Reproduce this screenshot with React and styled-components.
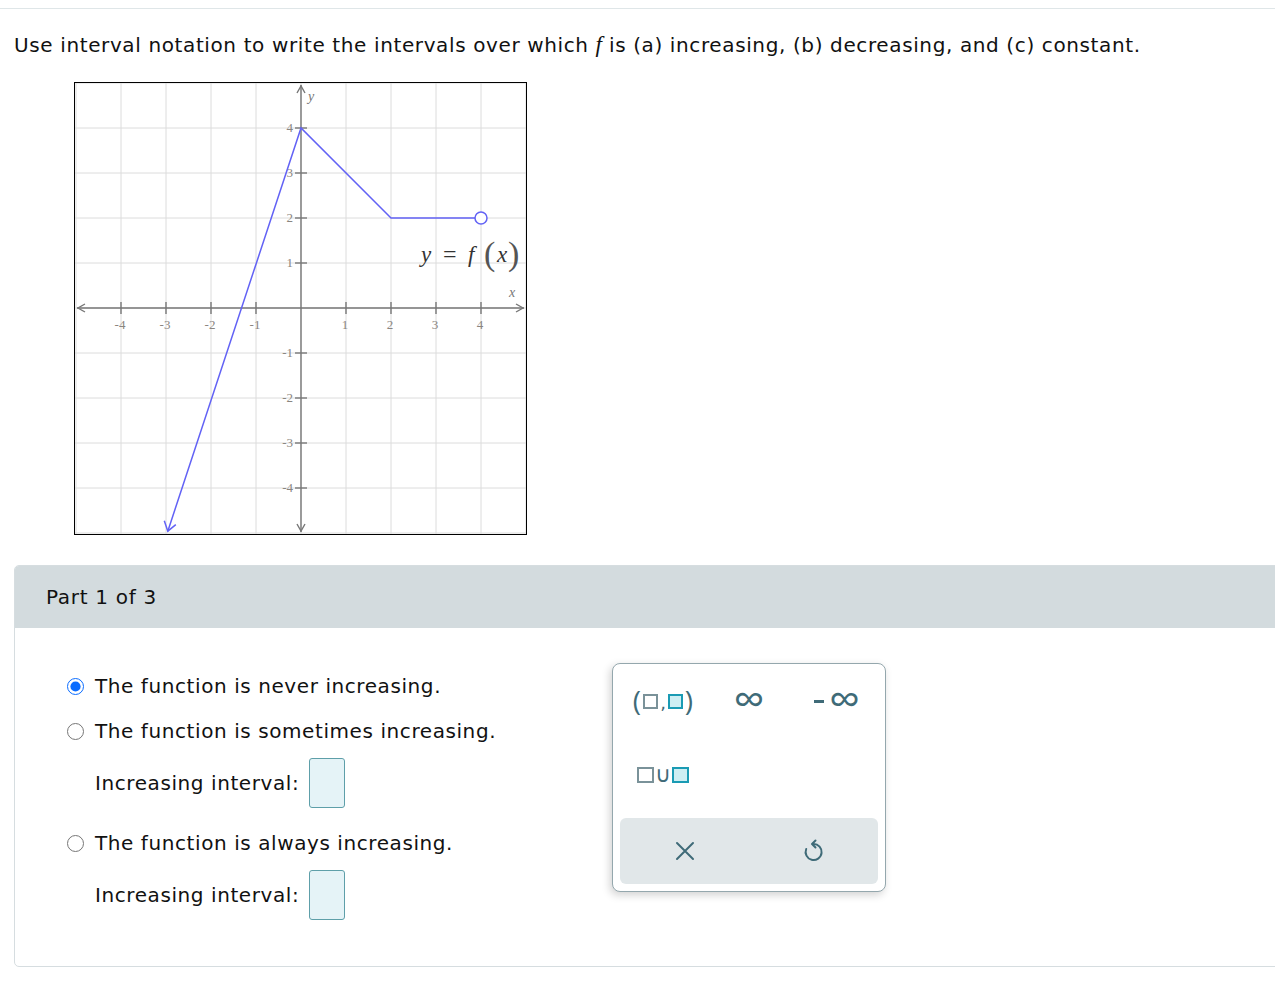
import React from 'react'
import styled, { createGlobalStyle } from 'styled-components'

const GlobalStyle = createGlobalStyle`
  html, body {
    margin: 0;
    padding: 0;
    background: #fff;
    overflow-x: hidden;
  }
  body {
    font-family: "DejaVu Sans", Verdana, sans-serif;
    color: #111;
  }
`

const UNIT = 45
const OX = 226
const OY = 225
const px = (x) => OX + x * UNIT
const py = (y) => OY - y * UNIT

const Graph = () => {
  const steps = [-5, -4, -3, -2, -1, 0, 1, 2, 3, 4, 5]
  const labels = [-4, -3, -2, -1, 1, 2, 3, 4]
  return (
    <svg width="451" height="451" viewBox="0 0 451 451">
      {steps.map((k) => (
        <line key={'v' + k} x1={px(k)} y1="0" x2={px(k)} y2="451" stroke="#dcdcdc" strokeWidth="1" />
      ))}
      {steps.map((k) => (
        <line key={'h' + k} x1="0" y1={py(k)} x2="451" y2={py(k)} stroke="#dcdcdc" strokeWidth="1" />
      ))}
      <g stroke="#777" strokeWidth="1.4" fill="none">
        <line x1="2" y1={OY} x2="449" y2={OY} />
        <line x1={OX} y1="2" x2={OX} y2="449" />
        <polyline points={`10,${OY - 4} 3,${OY} 10,${OY + 4}`} />
        <polyline points={`441,${OY - 4} 448,${OY} 441,${OY + 4}`} />
        <polyline points={`${OX - 4},10 ${OX},3 ${OX + 4},10`} />
        <polyline points={`${OX - 4},441 ${OX},448 ${OX + 4},441`} />
        {labels.map((k) => (
          <line key={'tx' + k} x1={px(k)} y1={OY - 6} x2={px(k)} y2={OY + 6} />
        ))}
        {labels.map((k) => (
          <line key={'ty' + k} x1={OX - 6} y1={py(k)} x2={OX + 6} y2={py(k)} />
        ))}
      </g>
      <g fill="#8a8580" fontFamily='"Liberation Serif", serif' fontSize="13">
        {labels.map((k) => (
          <text key={'lx' + k} x={px(k) - 1} y={OY + 21} textAnchor="middle">{k}</text>
        ))}
        {labels.map((k) => (
          <text key={'ly' + k} x={OX - 8} y={py(k) + 4} textAnchor="end">{k}</text>
        ))}
      </g>
      <g fill="#777" fontFamily='"Liberation Serif", serif' fontSize="14" fontStyle="italic">
        <text x="233" y="18">y</text>
        <text x="434" y="214">x</text>
      </g>
      <g stroke="#6262f5" strokeWidth="1.5" fill="none">
        <polyline points={`${px(-2.96)},${py(-4.96)} ${px(0)},${py(4)} ${px(2)},${py(2)} ${px(4) - 6},${py(2)}`} />
        <polyline points={`${px(-2.96) - 3.5},${py(-4.96) - 10.5} ${px(-2.96)},${py(-4.96)} ${px(-2.96) + 8},${py(-4.96) - 6.5}`} />
        <circle cx={px(4)} cy={py(2)} r="6" fill="#fff" />
      </g>
      <g fill="#333" fontFamily='"Liberation Serif", serif'>
        <text x="346" y="179" fontSize="23" fontStyle="italic">y</text>
        <text x="368" y="179" fontSize="24">=</text>
        <text x="393" y="179" fontSize="23" fontStyle="italic">f</text>
        <text x="409" y="182" fontSize="34" fill="#555">(</text>
        <text x="422" y="179" fontSize="23" fontStyle="italic">x</text>
        <text x="433" y="182" fontSize="34" fill="#555">)</text>
      </g>
    </svg>
  )
}

const BoxGlyph = ({ active, big }) => <Square $active={active} $big={big} />

export default function App() {
  return (
    <>
      <GlobalStyle />
      <Page>
        <Question>
          Use interval notation to write the intervals over which <MathF>f</MathF> is (a) increasing, (b)
          decreasing, and (c) constant.
        </Question>
        <GraphFrame>
          <Graph />
        </GraphFrame>
        <PartCard>
          <PartHeader>Part 1 of 3</PartHeader>
          <PartBody>
            <Options>
              <RadioRow>
                <Radio type="radio" name="inc" defaultChecked />
                <span>The function is never increasing.</span>
              </RadioRow>
              <RadioRow>
                <Radio type="radio" name="inc" />
                <span>The function is sometimes increasing.</span>
              </RadioRow>
              <IntervalRow>
                <span>Increasing interval:</span>
                <AnswerBox />
              </IntervalRow>
              <RadioRow $top={20}>
                <Radio type="radio" name="inc" />
                <span>The function is always increasing.</span>
              </RadioRow>
              <IntervalRow>
                <span>Increasing interval:</span>
                <AnswerBox />
              </IntervalRow>
            </Options>
            <Keypad>
              <KeyGrid>
                <Key>
                  <Paren>(</Paren>
                  <BoxGlyph />
                  <Comma>,</Comma>
                  <BoxGlyph active />
                  <Paren>)</Paren>
                </Key>
                <Key>
                  <Infinity>∞</Infinity>
                </Key>
                <Key $shift={4}>
                  <Minus />
                  <Infinity>∞</Infinity>
                </Key>
                <Key>
                  <BoxGlyph big />
                  <Union>∪</Union>
                  <BoxGlyph active big />
                </Key>
                <Key />
                <Key />
              </KeyGrid>
              <ActionBar>
                <ActionButton aria-label="clear">
                  <svg width="22" height="22" viewBox="0 0 22 22">
                    <path d="M3 3 L19 19 M19 3 L3 19" stroke="#3f6b78" strokeWidth="2" strokeLinecap="round" fill="none" />
                  </svg>
                </ActionButton>
                <ActionButton aria-label="undo">
                  <svg width="26" height="26" viewBox="0 0 26 26">
                    <path d="M12.5 6 A8 8 0 1 1 5.2 11" stroke="#3f6b78" strokeWidth="2" strokeLinecap="round" fill="none" />
                    <path d="M14.5 2.5 L11 6 L14.5 9.5" stroke="#3f6b78" strokeWidth="2" strokeLinecap="round" strokeLinejoin="round" fill="none" />
                  </svg>
                </ActionButton>
              </ActionBar>
            </Keypad>
          </PartBody>
        </PartCard>
      </Page>
    </>
  )
}

const Page = styled.div`
  margin-top: 8px;
  border-top: 1px solid #dfe6e8;
  padding: 24px 0 24px 14px;
`

const Question = styled.div`
  font-size: 20px;
  line-height: 23px;
  letter-spacing: 0.62px;
`

const MathF = styled.span`
  font-family: "Liberation Serif", serif;
  font-style: italic;
  font-size: 23px;
  letter-spacing: 0;
`

const GraphFrame = styled.div`
  margin: 25px 0 0 60px;
  width: 451px;
  height: 451px;
  border: 1px solid #000;
  svg {
    display: block;
  }
`

const PartCard = styled.div`
  margin-top: 30px;
  margin-right: -30px;
  border: 1px solid #d6dde0;
  border-radius: 5px;
  overflow: hidden;
`

const PartHeader = styled.div`
  height: 62px;
  background: #d3dbde;
  padding-left: 31px;
  display: flex;
  align-items: center;
  font-size: 20px;
  letter-spacing: 0.7px;
`

const PartBody = styled.div`
  display: flex;
  align-items: flex-start;
  padding: 43px 0 46px 52px;
`

const Options = styled.div`
  width: 545px;
  font-size: 20px;
  letter-spacing: 0.58px;
`

const RadioRow = styled.label`
  display: flex;
  align-items: center;
  height: 30px;
  margin-top: ${(p) => (p.$top !== undefined ? p.$top : 0)}px;
  margin-bottom: 15px;
  gap: 11px;
`

const Radio = styled.input`
  width: 17px;
  height: 17px;
  margin: 0;
  accent-color: #0a6cff;
`

const IntervalRow = styled.div`
  display: flex;
  align-items: center;
  gap: 10px;
  margin: -3px 0 0 28px;
`

const AnswerBox = styled.div`
  width: 34px;
  height: 48px;
  background: #e5f3f7;
  border: 1px solid #5e9fa9;
  border-radius: 3px;
`

const Keypad = styled.div`
  margin-top: -8px;
  width: 258px;
  padding: 0 7px 7px;
  border: 1px solid #94a7ad;
  border-radius: 8px;
  box-shadow: -2px 3px 8px rgba(0, 0, 0, 0.18);
  background: #fff;
`

const KeyGrid = styled.div`
  display: grid;
  grid-template-columns: repeat(3, 1fr);
  grid-auto-rows: 74px;
`

const Key = styled.div`
  display: flex;
  align-items: center;
  justify-content: center;
  padding-left: ${(p) => p.$shift || 0}px;
  color: #3f6b78;
  font-family: "DejaVu Sans", sans-serif;
`

const Paren = styled.span`
  font-family: "Open Sans", sans-serif;
  font-size: 28px;
  line-height: 1;
  margin: 0 2px;
  transform: translateY(-1px);
`

const Comma = styled.span`
  font-size: 18px;
  line-height: 1;
  margin: 4px 2px 0;
`

const Square = styled.span`
  display: inline-block;
  width: ${(p) => (p.$big ? 13 : 11)}px;
  height: ${(p) => (p.$big ? 12 : 11)}px;
  border: 2px solid ${(p) => (p.$active ? '#1a9bb4' : '#7a9299')};
  background: ${(p) => (p.$active ? '#cdeef3' : '#fff')};
`

const Infinity = styled.span`
  font-family: "Open Sans", sans-serif;
  font-size: 44px;
  line-height: 1;
  transform: translateY(-3px);
`

const Minus = styled.span`
  display: inline-block;
  width: 10px;
  height: 3px;
  background: #3f6b78;
  margin-right: 5px;
`

const Union = styled.span`
  font-size: 22px;
  line-height: 1;
  margin: 0 1px;
`

const ActionBar = styled.div`
  margin-top: 6px;
  height: 66px;
  display: grid;
  grid-template-columns: 1fr 1fr;
  background: #e1e7e9;
  border-radius: 6px;
`

const ActionButton = styled.button`
  border: none;
  background: transparent;
  display: flex;
  align-items: center;
  justify-content: center;
  padding: 0;
  cursor: pointer;
`
